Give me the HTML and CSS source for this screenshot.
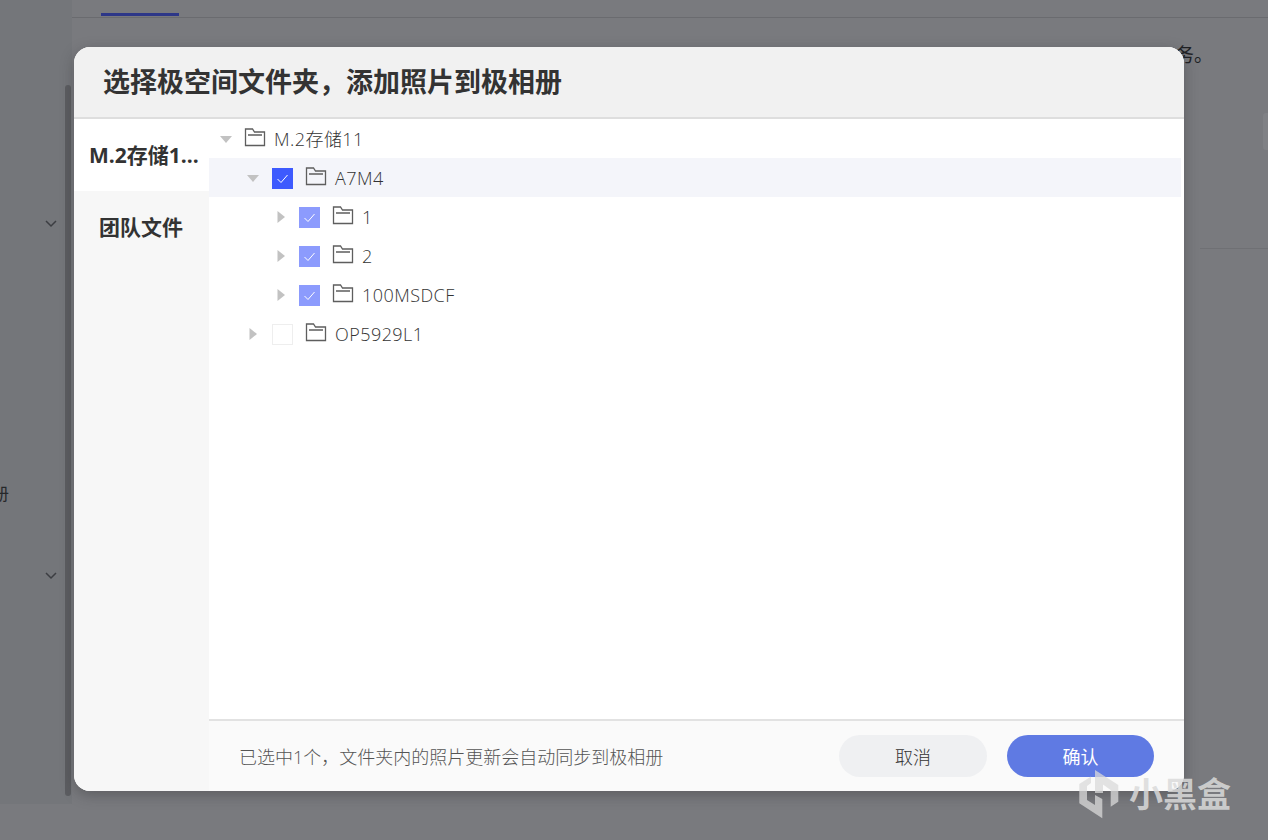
FILE: index.html
```html
<!DOCTYPE html>
<html lang="zh">
<head>
<meta charset="utf-8">
<title>选择极空间文件夹</title>
<link rel="stylesheet" href="styles.css">
</head>
<body>
<div class="page">
  <aside class="side">
    <span class="side-word">册</span>
    <svg class="chev chev-a" width="14" height="9" viewBox="0 0 14 9"><path d="M2 2l5 5 5-5" fill="none" stroke="#3c3e42" stroke-width="1.5"/></svg>
    <svg class="chev chev-b" width="14" height="9" viewBox="0 0 14 9"><path d="M2 2l5 5 5-5" fill="none" stroke="#3c3e42" stroke-width="1.5"/></svg>
    <div class="side-scroll"></div>
  </aside>
  <main class="main">
    <div class="tabs"><div class="tab-active"></div></div>
    <p class="desc">务。</p>
    <div class="edge-box"></div>
    <div class="rule"></div>
  </main>
</div>

<section class="modal">
  <header class="modal-head">选择极空间文件夹，添加照片到极相册</header>
  <div class="modal-body">
    <nav class="places">
      <div class="place place-on">M.2存储1...</div>
      <div class="place">团队文件</div>
    </nav>
    <div class="content">
      <div class="tree">
        <div class="row l0">
          <svg class="arrow" width="12" height="12" viewBox="0 0 12 12"><path d="M0 3h12L6 10z"/></svg>
          <svg class="folder" width="22" height="19" viewBox="0 0 22 19"><path d="M1.500 17.500V1h7l2 3H20.500v13.500zM4 7h14"/></svg>
          <span class="name">M.2存储11</span>
        </div>
        <div class="row l1 row-on">
          <svg class="arrow" width="12" height="12" viewBox="0 0 12 12"><path d="M0 3h12L6 10z"/></svg>
          <span class="check check-on"><svg width="21" height="21" viewBox="0 0 21 21"><path d="M5.500 11l3.500 3.500 6.500-7.500"/></svg></span>
          <svg class="folder" width="22" height="19" viewBox="0 0 22 19"><path d="M1.500 17.500V1h7l2 3H20.500v13.500zM4 7h14"/></svg>
          <span class="name">A7M4</span>
        </div>
        <div class="row l2">
          <svg class="arrow" width="12" height="12" viewBox="0 0 12 12"><path d="M2.500 0v12L10 6z"/></svg>
          <span class="check check-part"><svg width="21" height="21" viewBox="0 0 21 21"><path d="M5.500 11l3.500 3.500 6.500-7.500"/></svg></span>
          <svg class="folder" width="22" height="19" viewBox="0 0 22 19"><path d="M1.500 17.500V1h7l2 3H20.500v13.500zM4 7h14"/></svg>
          <span class="name">1</span>
        </div>
        <div class="row l2">
          <svg class="arrow" width="12" height="12" viewBox="0 0 12 12"><path d="M2.500 0v12L10 6z"/></svg>
          <span class="check check-part"><svg width="21" height="21" viewBox="0 0 21 21"><path d="M5.500 11l3.500 3.500 6.500-7.500"/></svg></span>
          <svg class="folder" width="22" height="19" viewBox="0 0 22 19"><path d="M1.500 17.500V1h7l2 3H20.500v13.500zM4 7h14"/></svg>
          <span class="name">2</span>
        </div>
        <div class="row l2">
          <svg class="arrow" width="12" height="12" viewBox="0 0 12 12"><path d="M2.500 0v12L10 6z"/></svg>
          <span class="check check-part"><svg width="21" height="21" viewBox="0 0 21 21"><path d="M5.500 11l3.500 3.500 6.500-7.500"/></svg></span>
          <svg class="folder" width="22" height="19" viewBox="0 0 22 19"><path d="M1.500 17.500V1h7l2 3H20.500v13.500zM4 7h14"/></svg>
          <span class="name">100MSDCF</span>
        </div>
        <div class="row l1">
          <svg class="arrow" width="12" height="12" viewBox="0 0 12 12"><path d="M2.500 0v12L10 6z"/></svg>
          <span class="check"></span>
          <svg class="folder" width="22" height="19" viewBox="0 0 22 19"><path d="M1.500 17.500V1h7l2 3H20.500v13.500zM4 7h14"/></svg>
          <span class="name">OP5929L1</span>
        </div>
      </div>
      <footer class="foot">
        <span class="note">已选中1个，文件夹内的照片更新会自动同步到极相册</span>
        <div class="actions">
          <button class="btn btn-cancel">取消</button>
          <button class="btn btn-ok">确认</button>
        </div>
      </footer>
    </div>
  </div>
</section>

<div class="mark">
  <svg width="44" height="50" viewBox="0 0 44 50"><path d="M17 1L40.300 16V32.700L32.700 37.700V21L25 15.500V24H17z"/><path d="M1.300 15L13 7.500V14L9 17V31L17 36V26L24.300 30V49.300L1.300 34.300z"/></svg>
  <span>小黑盒</span>
</div>
</body>
</html>
```
FILE: styles.css
```css
* { box-sizing: border-box; }
html, body { margin: 0; height: 100%; }
body {
  width: 1268px;
  height: 840px;
  overflow: hidden;
  position: relative;
  background: #797a7e;
  font-family: "Open Sans", "Noto Sans CJK SC", sans-serif;
  color: #333;
}
.page { display: flex; height: 840px; }
.side {
  position: relative;
  width: 72px;
  height: 804px;
  background: #74767a;
  flex: none;
}
.side-word {
  position: absolute;
  left: -8px;
  top: 482px;
  font-size: 17px;
  line-height: 24px;
  color: #26282b;
}
.chev { position: absolute; left: 44px; }
.chev-a { top: 219px; }
.chev-b { top: 571px; }
.side-scroll {
  position: absolute;
  left: 65px;
  top: 85px;
  width: 6px;
  height: 711px;
  border-radius: 3px;
  background: #5c5d61;
}
.main { flex: 1; position: relative; }
.tabs {
  height: 18px;
  border-bottom: 1px solid #6a6b6f;
  padding-left: 29px;
}
.tab-active { width: 78px; height: 16px; border-bottom: 3px solid #2d3788; }
.desc {
  margin: 0;
  position: absolute;
  left: 1103px;
  top: 41px;
  font-size: 19px;
  line-height: 28px;
  color: #202124;
}
.edge-box {
  position: absolute;
  left: 1191px;
  top: 113px;
  width: 5px;
  height: 37px;
  border-radius: 3px 0 0 3px;
  background: #808185;
}
.rule {
  position: absolute;
  left: 1128px;
  right: 0;
  top: 248px;
  height: 1px;
  background: #6f7074;
}
.modal {
  position: absolute;
  left: 74px;
  top: 47px;
  width: 1110px;
  height: 744px;
  border-radius: 16px;
  overflow: hidden;
  background: #fff;
  display: flex;
  flex-direction: column;
  box-shadow: 0 4px 14px rgba(40, 40, 44, .35);
}
.modal-head {
  height: 72px;
  padding: 0 29px;
  flex: none;
  background: #f1f1f1;
  border-bottom: 2px solid #dedede;
  font-size: 27px;
  font-weight: 700;
  line-height: 70px;
  color: #333;
}
.modal-body { flex: 1; display: flex; min-height: 0; }
.places { width: 135px; flex: none; background: #f7f7f7; }
.place {
  height: 72px;
  padding-left: 15px;
  font-size: 21px;
  font-weight: 700;
  line-height: 72px;
  color: #333;
  white-space: nowrap;
}
.place + .place { padding-left: 25px; }
.place-on { background: #fff; }
.content { flex: 1; display: flex; flex-direction: column; min-width: 0; }
.tree { flex: 1; padding: 0 3px 0 0; }
.row {
  position: relative;
  height: 39px;
  display: flex;
  align-items: center;
  font-size: 18px;
  font-weight: 300;
  color: #333;
}
.row-on { background: #f4f5fa; }
.l0 { padding-left: 11px; }
.l1 { padding-left: 38px; }
.l2 { padding-left: 66px; }
.arrow { flex: none; fill: #c2c2c2; }
.check {
  flex: none;
  width: 21px;
  height: 21px;
  margin-left: 13px;
  background: #fff;
  border: 1px solid #eeeeee;
  position: relative;
  top: 1px;
}
.l2 .check { margin-left: 12px; }
.check svg { display: block; fill: none; stroke: #fff; stroke-width: 1; }
.check-on { background: #3d5afe; border: 0; }
.check-part { background: #8c9bfd; border: 0; }
.folder {
  flex: none;
  margin-left: 12px;
  position: relative;
  top: -1px;
  fill: none;
  stroke: #5e5e5e;
  stroke-width: 1.300;
}
.name { margin-left: 8px; line-height: 24px; letter-spacing: .45px; white-space: nowrap; }
.foot {
  height: 72px;
  flex: none;
  display: flex;
  align-items: center;
  justify-content: space-between;
  padding: 0 30px;
  background: #fafafa;
  border-top: 2px solid #e2e2e2;
}
.note { font-size: 18px; font-weight: 300; color: #555; white-space: nowrap; }
.actions { display: flex; gap: 20px; }
.btn {
  width: 148px;
  height: 42px;
  border: 0;
  padding: 0;
  border-radius: 21px;
  font-family: inherit;
  font-size: 18px;
}
.btn-cancel { background: #eff0f2; color: #333; font-weight: 300; }
.btn-ok { width: 147px; background: #5f7ae3; color: #fff; }
.mark {
  position: absolute;
  left: 1078px;
  top: 769px;
  display: flex;
  align-items: center;
  gap: 7px;
  color: rgba(218, 218, 218, .85);
}
.mark svg { fill: rgba(218, 218, 218, .75); display: block; }
.mark span {
  font-size: 34px;
  font-weight: 700;
  line-height: 50px;
}
```
